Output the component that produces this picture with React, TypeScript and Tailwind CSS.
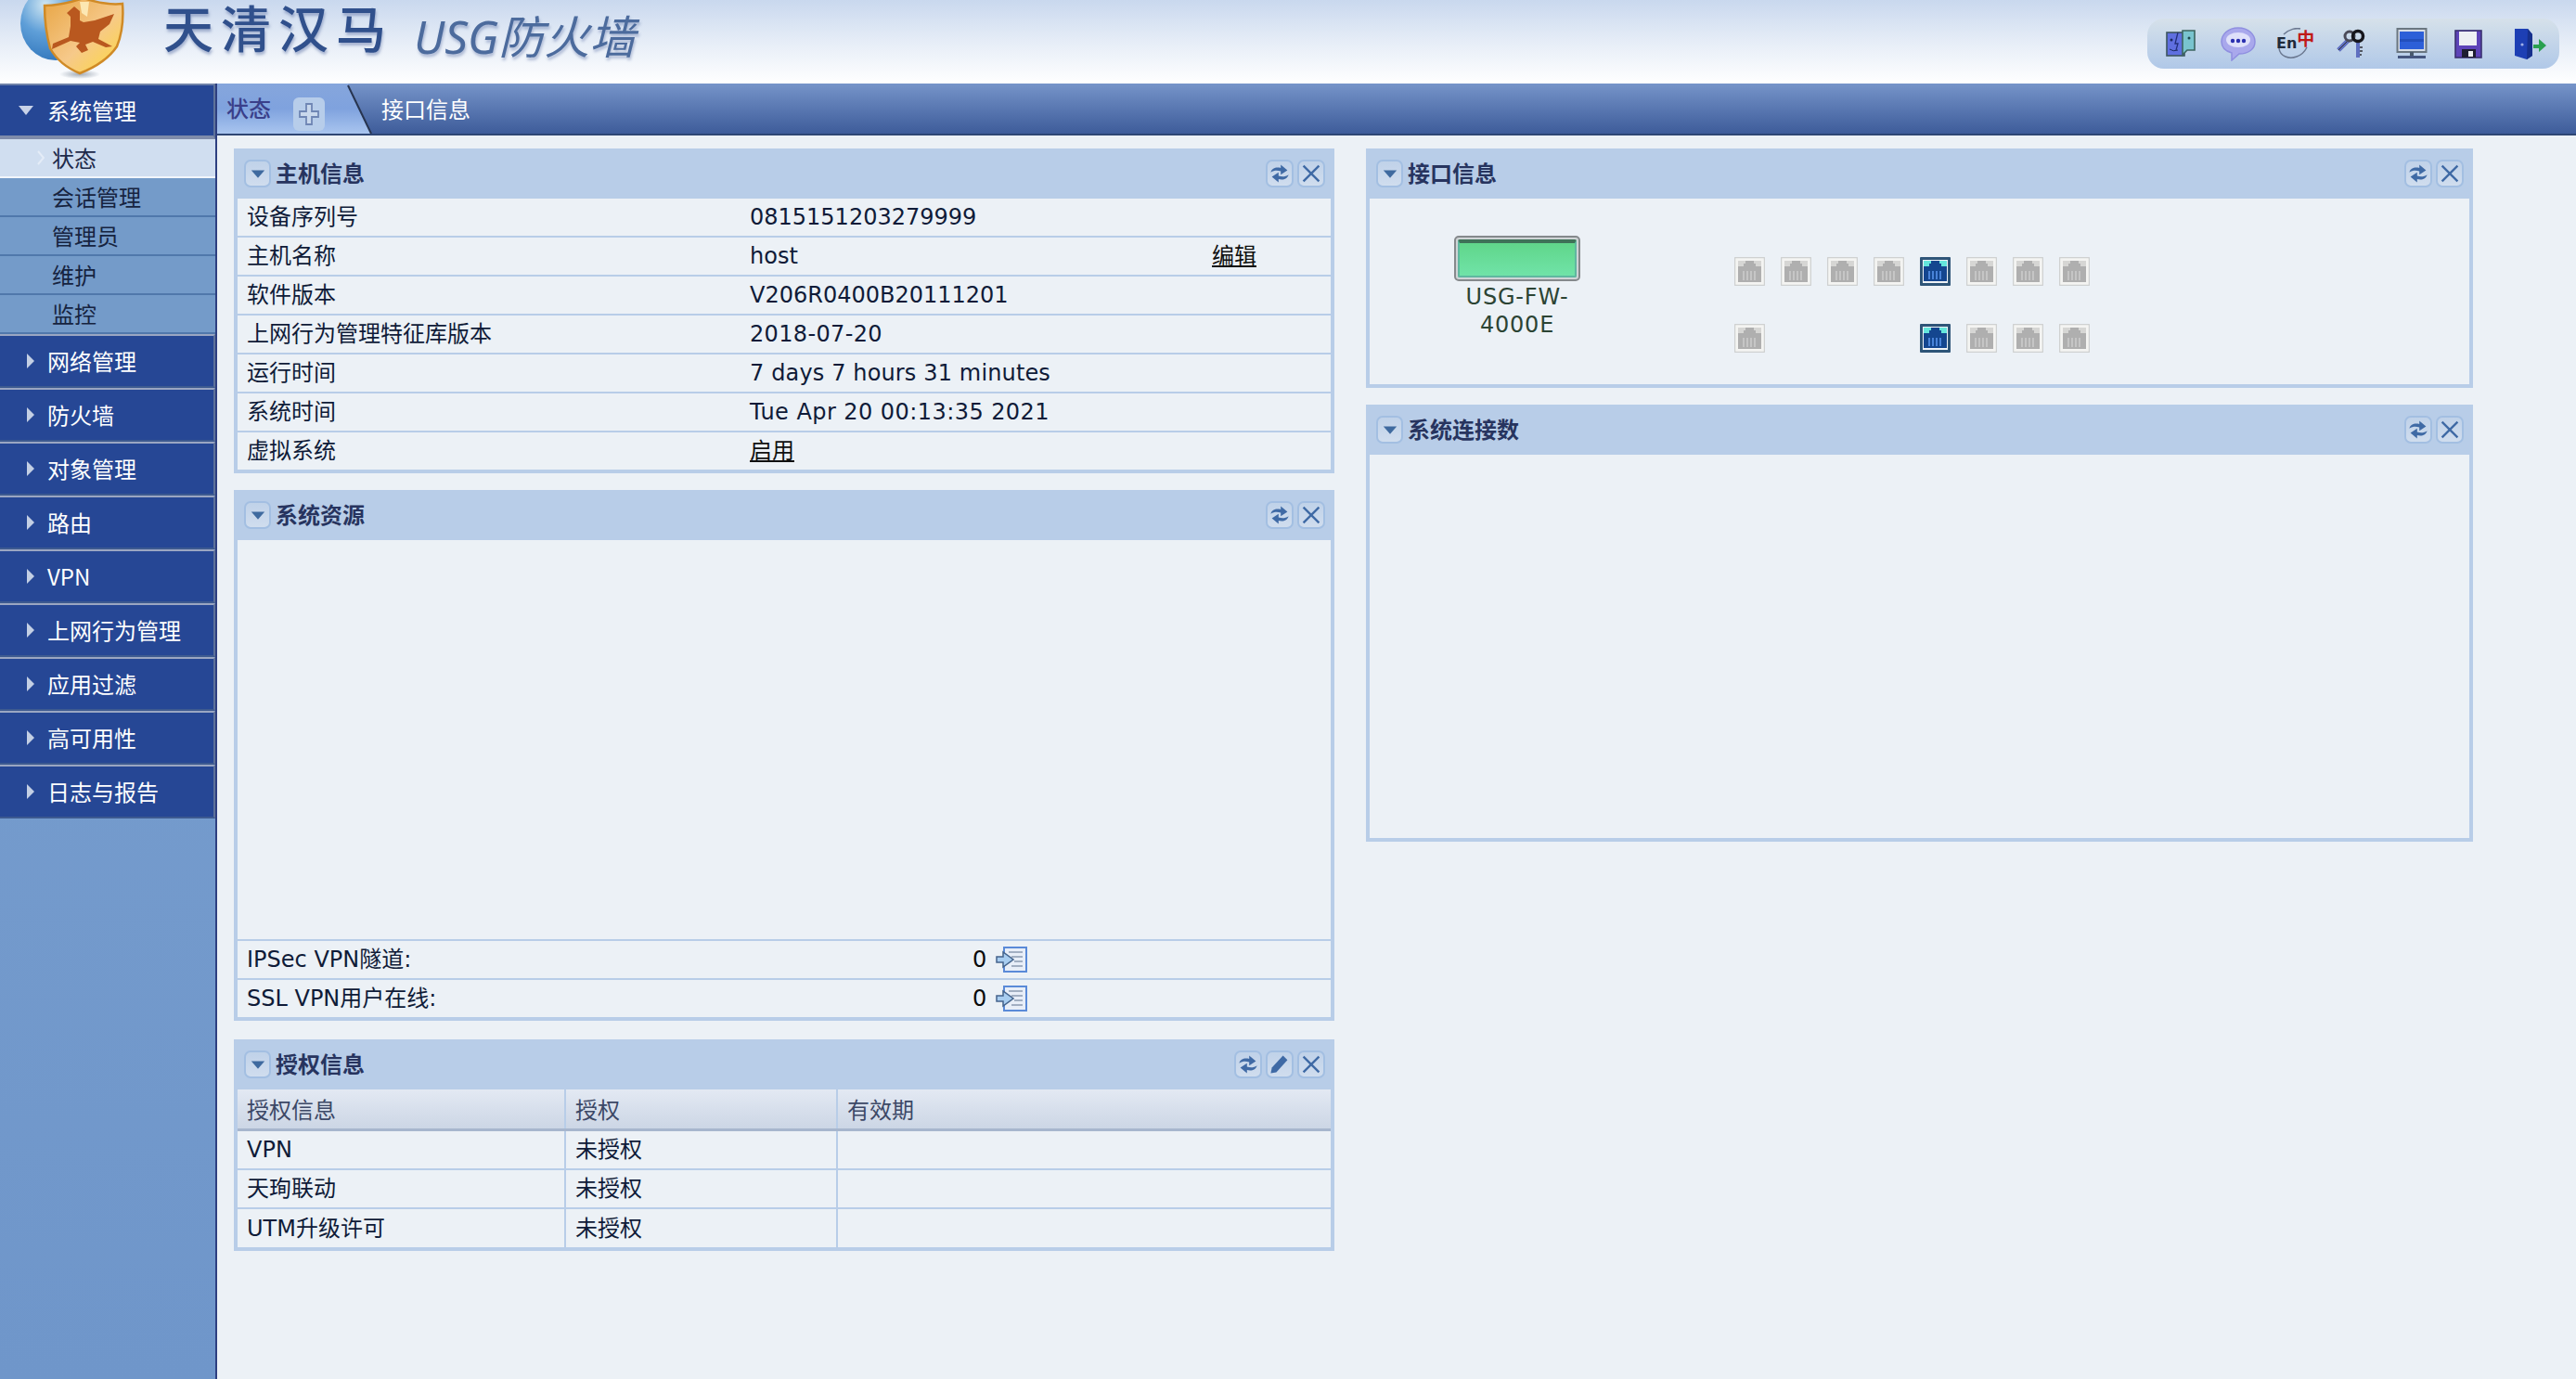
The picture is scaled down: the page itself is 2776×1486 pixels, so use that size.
import React from "react";

const FONT = "font-['DejaVu_Sans','Noto_Sans_CJK_SC',sans-serif]";
const CJK = "font-['Noto_Sans_CJK_SC',sans-serif]";

function Logo() {
  return (
    <svg width="140" height="90" viewBox="0 0 140 90" className="shrink-0 ml-[10px] self-start blur-[0.6px]">
      <defs>
        <linearGradient id="sh" x1="0" y1="0" x2="1" y2="1">
          <stop offset="0" stopColor="#e8a544" />
          <stop offset="0.55" stopColor="#f6c98a" />
          <stop offset="0.85" stopColor="#fbd456" />
          <stop offset="1" stopColor="#e59a22" />
        </linearGradient>
        <radialGradient id="gl" cx="0.35" cy="0.25" r="0.85">
          <stop offset="0" stopColor="#cfe6f2" />
          <stop offset="0.45" stopColor="#5f9fd8" />
          <stop offset="1" stopColor="#2a70b8" />
        </radialGradient>
        <radialGradient id="sd" cx="0.5" cy="0.5" r="0.5">
          <stop offset="0" stopColor="#5a6a80" stopOpacity="0.55" />
          <stop offset="1" stopColor="#5a6a80" stopOpacity="0" />
        </radialGradient>
      </defs>
      <ellipse cx="76" cy="80" rx="22" ry="5" fill="url(#sd)" />
      <ellipse cx="50" cy="25" rx="38" ry="40" fill="url(#gl)" />
      <path d="M38 6 Q56 6 80 -2 Q104 6 122 4 Q124 30 116 50 Q104 68 76 79 Q54 70 44 52 Q38 30 38 6Z" fill="url(#sh)" stroke="#d08a26" strokeWidth="2.5" />
      <path d="M62 14 L70 7 L76 12 L76 22 L80 24 L92 22 L113 15 L108 26 L98 34 L96 42 L111 50 L104 51 L90 45 L82 48 L85 54 L78 57 L72 50 L76 46 L66 44 L46 53 L47 47 L64 40 L66 28 L66 18Z" fill="#b9581f" />
      <path d="M76 2 L86 2 L84 18 L78 14Z" fill="#fff2c4" opacity="0.8" />
    </svg>
  );
}

function ToolIcons() {
  return (
    <div className="w-[444px] h-[54px] mt-[20px] mr-[18px] rounded-[18px] bg-gradient-to-b from-[#d6e1ea] to-[#b0c8e8] flex items-center">
      <svg width="32" height="30" viewBox="0 0 32 30" className="ml-[20px] blur-[0.4px]">
        <rect x="1" y="3" width="19" height="25" fill="#5f6fe0" stroke="#3c5560" strokeWidth="1.6" />
        <path d="M18 1 H31 V22 H23 L18 27Z" fill="#79c4cf" stroke="#3c6560" strokeWidth="1.6" />
        <path d="M13 3 L10 15 H13 L11 22" stroke="#23307a" fill="none" strokeWidth="1.3" />
        <circle cx="6" cy="11" r="1.5" fill="#1c2a60" />
        <circle cx="25" cy="9" r="1.5" fill="#1c4a50" />
        <path d="M4 21 Q8 24 13 22" stroke="#1c2a60" fill="none" />
      </svg>
      <svg width="38" height="38" viewBox="0 0 38 38" className="ml-[27px] blur-[0.4px]">
        <path d="M19 2 C30 2 37 9 37 17 C37 25 30 30 20 30 L12 37 L12 29 C5 27 1 23 1 17 C1 9 8 2 19 2Z" fill="#a9a8ec" stroke="#8f8fe0" strokeWidth="1.5" />
        <ellipse cx="19" cy="15" rx="13" ry="8" fill="#dfe0fa" />
        <circle cx="13" cy="16" r="2.2" fill="#2a2fb0" />
        <circle cx="19" cy="16" r="2.2" fill="#2a2fb0" />
        <circle cx="25" cy="16" r="2.2" fill="#2a2fb0" />
      </svg>
      <div className="ml-[22px] relative w-[41px] h-[34px] flex items-start">
        <svg width="40" height="34" viewBox="0 0 40 34" className="absolute left-0 top-0">
          <path d="M3 22 C4 31 14 34 22 31 C28 29 31 25 33 21 M8 7 C14 1 22 0 26 1" stroke="#6b7890" strokeWidth="1.5" fill="none" />
        </svg>
        <span className={`relative mt-[7px] text-[16px] leading-[20px] font-bold text-[#1f2a3a] ${FONT}`}>En</span>
        <span className={`relative mt-[-1px] text-[19px] leading-[24px] font-bold text-[#c01818] ${CJK}`}>中</span>
      </div>
      <svg width="31" height="33" viewBox="0 0 31 33" className="ml-[24px] blur-[0.3px]">
        <path d="M2 23 L13 12" stroke="#5f6fc0" strokeWidth="5" />
        <path d="M2 23 L13 12" stroke="#30303a" strokeWidth="1" />
        <circle cx="14" cy="8" r="5" fill="none" stroke="#4a4a58" strokeWidth="3" />
        <path d="M23 12 L23 31" stroke="#5f6fc0" strokeWidth="4" />
        <path d="M25 20 L28 20 M25 24 L28 24 M25 28 L27 28" stroke="#30303a" strokeWidth="1.5" />
        <circle cx="23" cy="8" r="5.5" fill="none" stroke="#16161c" strokeWidth="3.5" />
      </svg>
      <svg width="34" height="34" viewBox="0 0 34 34" className="ml-[33px] blur-[0.4px]">
        <rect x="1.5" y="1" width="31" height="25" fill="#d7dde6" stroke="#6a7680" strokeWidth="2" />
        <rect x="4" y="4" width="26" height="19" fill="#2d5fd8" />
        <rect x="4" y="12" width="26" height="3" fill="#2048b0" opacity="0.7" />
        <rect x="15" y="26" width="4" height="4" fill="#4a5a6c" />
        <rect x="2" y="30" width="30" height="3" fill="#46567e" />
      </svg>
      <svg width="30" height="31" viewBox="0 0 30 31" className="ml-[29px] blur-[0.4px]">
        <rect x="1" y="1" width="28" height="29" fill="#5d43b8" stroke="#3a3070" strokeWidth="1.6" />
        <rect x="5" y="2" width="19" height="15" fill="#eef0f4" />
        <rect x="8" y="21" width="15" height="9" fill="#1e1e30" />
        <rect x="15" y="23" width="5" height="6" fill="#eef0f4" />
      </svg>
      <svg width="36" height="35" viewBox="0 0 36 35" className="ml-[34px] blur-[0.4px]">
        <path d="M1 1 H15 L20 7 V30 L14 34 L1 30Z" fill="#1d3fb4" />
        <path d="M15 1 L20 7 V30 L14 34 Z" fill="#16308c" />
        <circle cx="9" cy="18" r="1.6" fill="#9fb0e8" />
        <path d="M21 18 H27 V12 L35 19 L27 26 V22 H21Z" fill="#2aa050" />
      </svg>
    </div>
  );
}

function HeadBtn({ kind }: { kind: "collapse" | "refresh" | "close" | "edit" }) {
  return (
    <span className={`${kind === "collapse" ? "w-[29px]" : "w-[30px]"} h-[30px] rounded-[7px] border-2 border-[#a3bfe2] bg-gradient-to-b from-[#c0d2e9] to-[#d0ddee] flex items-center justify-center shrink-0`}>
      <svg width="24" height="24" viewBox="0 0 20 20">
        {kind === "collapse" && <path d="M4 7 H16 L10 14Z" fill="#3f6a9f" />}
        {kind === "refresh" && (
          <>
            <path d="M2 9 C3 5 7 4 11 5 V2 L17 7 L11 11 V8 C8 7 5 7 2 9Z" fill="#3f6aa5" />
            <path d="M18 11 C17 15 13 16 9 15 V18 L3 13 L9 9 V12 C12 13 15 13 18 11Z" fill="#3f6aa5" />
          </>
        )}
        {kind === "close" && <path d="M3 3 L17 17 M17 3 L3 17" stroke="#3f6aa5" strokeWidth="2" />}
        {kind === "edit" && <path d="M13 2 L17 6 L7 17 L2 18 L3 13Z" fill="#3f6aa5" />}
      </svg>
    </span>
  );
}

function Panel({ title, edit, children }: { title: string; edit?: boolean; children: React.ReactNode }) {
  return (
    <section className="bg-[#ecf1f6] border-[4px] border-t-0 border-[#b8cde8] flex flex-col">
      <div className="h-[54px] -mx-[4px] bg-[#b8cde8] flex items-center pl-[11px] pr-[10px] shrink-0">
        <HeadBtn kind="collapse" />
        <span className={`ml-[5px] -mt-[2px] text-[24px] leading-[30px] font-semibold text-[#27345f] ${CJK}`}>{title}</span>
        <span className="ml-auto flex gap-[4px]">
          <HeadBtn kind="refresh" />
          {edit && <HeadBtn kind="edit" />}
          <HeadBtn kind="close" />
        </span>
      </div>
      {children}
    </section>
  );
}

function InfoRow({ label, value, link, extra, last, track = "" }: { label: string; value: string; link?: boolean; extra?: string; last?: boolean; track?: string }) {
  return (
    <div className={`${last ? "h-[40px]" : "h-[42px] border-b-2 border-[#b8cde8]"} flex items-center text-[24px] text-[#0f1b38] ${FONT}`}>
      <span className="w-[552px] pl-[10px] shrink-0">{label}</span>
      <span className={`w-[498px] shrink-0 ${track} ${link ? "underline text-[#101010]" : ""}`}>{value}</span>
      {extra && <span className="underline text-[#101010]">{extra}</span>}
    </div>
  );
}

function DocIcon() {
  return (
    <svg width="34" height="28" viewBox="0 0 34 28" className="ml-[10px] blur-[0.3px]">
      <rect x="9" y="1" width="24" height="26" fill="#e8eef8" stroke="#5a8ad8" strokeWidth="2" />
      <path d="M14 6 H29 M17 11 H29 M20 16 H29 M17 21 H29" stroke="#8a9ab0" strokeWidth="1.5" />
      <path d="M1 11 H8 V6 L19 14 L8 22 V17 H1Z" fill="#a8cdf0" stroke="#44638c" strokeWidth="1.5" />
    </svg>
  );
}

function VpnRow({ label }: { label: string }) {
  return (
    <div className={`h-[42px] flex items-center text-[24px] text-[#0f1b38] ${FONT} border-t-2 border-[#b8cde8]`}>
      <span className="w-[792px] pl-[10px] shrink-0">{label}</span>
      <span className="text-[#0a0a0a]">0</span>
      <DocIcon />
    </div>
  );
}

function Port({ on, className = "" }: { on?: boolean; className?: string }) {
  if (on) {
    return (
      <svg width="33" height="31" viewBox="0 0 33 31" className={`blur-[0.3px] ${className}`}>
        <rect x="0" y="0" width="33" height="31" rx="1" fill="#2e5578" />
        <rect x="3" y="3" width="27" height="25" fill="#eef2f6" />
        <rect x="4" y="4" width="25" height="22" fill="#64e6dc" />
        <path d="M4 26 V10 H10 V7 H12 V4 H21 V7 H23 V10 H29 V26Z" fill="#14468f" />
        <path d="M10 15 V24 M14 15 V24 M18 15 V24 M22 15 V24" stroke="#4f8ae0" strokeWidth="1.8" />
      </svg>
    );
  }
  return (
    <svg width="33" height="31" viewBox="0 0 33 31" className={`blur-[0.3px] ${className}`}>
      <rect x="0.5" y="0.5" width="32" height="30" rx="1" fill="#f4f4f2" stroke="#cfd1d1" strokeWidth="1.5" />
      <rect x="4" y="4" width="25" height="23" fill="#d6d6d4" />
      <path d="M4 27 V10 H10 V7 H12 V4 H21 V7 H23 V10 H29 V27Z" fill="#afafaf" />
      <path d="M10 15 V25 M14 15 V25 M18 15 V25 M22 15 V25" stroke="#c8c8c8" strokeWidth="1.8" />
    </svg>
  );
}

function Sidebar() {
  const sub = ["会话管理", "管理员", "维护", "监控"];
  const top = ["网络管理", "防火墙", "对象管理", "路由", "VPN", "上网行为管理", "应用过滤", "高可用性", "日志与报告"];
  return (
    <aside className={`w-[234px] shrink-0 border-r-2 border-[#2d3f80] bg-gradient-to-b from-[#7aa0cf] to-[#6f96ca] ${CJK}`}>
      <div className="h-[60px] bg-[#264795] border-t-2 border-b-[4px] border-r-2 border-t-[#6e81a8] border-b-[#7f8cab] border-r-[#5f7299] flex items-center text-white text-[24px]">
        <svg width="18" height="12" viewBox="0 0 18 12" className="ml-[19px] blur-[0.3px]"><path d="M1 1 H17 L9 11Z" fill="#c8d2e8" /></svg>
        <span className="ml-[14px]">系统管理</span>
      </div>
      <div className="h-[40px] bg-[#d0def0] flex items-center text-[24px] text-[#1e2a4a] pl-[56px] relative">
        <svg width="8" height="16" viewBox="0 0 8 16" className="absolute left-[40px] top-[12px]"><path d="M1 1 L7 8 L1 15" stroke="#e4ecf7" strokeWidth="2" fill="none" /></svg>
        状态
      </div>
      <div className="h-[2px] bg-[#f2f6fb]" />
      {sub.map((s) => (
        <div key={s} className="h-[42px] bg-[#749bc9] border-b-2 border-[#5078ab] flex items-center pl-[56px] text-[24px] text-[#16233f]">
          {s}
        </div>
      ))}
      {top.map((t) => (
        <div key={t} className="h-[58px] bg-[#264795] border-t-2 border-r-2 border-b-2 border-t-[#9aa6c2] border-b-[#3d5a90] border-r-[#5f7299] flex items-center text-white text-[24px]">
          <svg width="10" height="18" viewBox="0 0 10 18" className="ml-[28px] blur-[0.3px]"><path d="M1 1 L9 9 L1 17Z" fill="#c3cfe4" /></svg>
          <span className="ml-[13px]">{t}</span>
        </div>
      ))}
    </aside>
  );
}

export default function App() {
  return (
    <div className="w-[2776px] h-[1486px] overflow-hidden flex flex-col bg-[#ecf1f6]">
      <header className="h-[90px] shrink-0 bg-gradient-to-b from-[#c9d8ee] via-[#e6edf7] to-[#ffffff] flex items-start overflow-hidden">
        <Logo />
        <span className="ml-[26px] mt-[4px] text-[54px] leading-[60px] font-medium tracking-[8px] text-[#30508c] [text-shadow:1px_3px_3px_rgba(100,120,170,0.5)] font-['Liberation_Serif','Noto_Sans_CJK_SC',sans-serif]">天清汉马</span>
        <span className="ml-[22px] mt-[6px] text-[49px] leading-[66px] italic text-[#4c6b9d] [text-shadow:1px_3px_3px_rgba(100,120,170,0.45)] font-['Noto_Sans','Noto_Sans_CJK_SC',sans-serif]">USG防火墙</span>
        <div className="ml-auto">
          <ToolIcons />
        </div>
      </header>
      <div className="flex flex-1 min-h-0">
        <Sidebar />
        <main className="flex-1 flex flex-col min-w-0">
          <div className="h-[56px] shrink-0 bg-gradient-to-b from-[#7694c9] to-[#3e5c9a] border-b-2 border-[#2e4674] flex items-center relative">
            <div className="w-[166px] h-[54px] shrink-0 relative">
              <div className="absolute inset-0 bg-gradient-to-b from-[#86a6dc] via-[#7fa2de] to-[#a9c5ef] [clip-path:polygon(0_0,85%_0,100%_100%,0_100%)]" />
              <svg width="34" height="56" viewBox="0 0 34 56" className="absolute right-[-2px] top-0">
                <path d="M7 2 L32 54" stroke="#27344f" strokeWidth="2" fill="none" />
              </svg>
              <span className={`absolute left-[10px] top-[11px] text-[24px] leading-[30px] font-medium text-[#3a3f8a] ${CJK}`}>状态</span>
              <span className="absolute left-[82px] top-[15px] w-[34px] h-[36px] rounded-[6px] bg-[#b7cdea] flex items-center justify-center">
                <svg width="24" height="26" viewBox="0 0 24 26"><path d="M9 2 H15 V10 H22 V16 H15 V24 H9 V16 H2 V10 H9Z" fill="#c9d8ec" stroke="#6f86b4" strokeWidth="1.8" /></svg>
              </span>
            </div>
            <span className={`ml-[11px] text-[24px] leading-[30px] text-white ${CJK}`}>接口信息</span>
          </div>
          <div className="flex flex-1 items-start pt-[14px] pl-[18px]">
            <div className="w-[1186px] shrink-0 flex flex-col gap-[18px]">
              <Panel title="主机信息">
                <InfoRow label="设备序列号" value="0815151203279999" />
                <InfoRow label="主机名称" value="host" extra="编辑" />
                <InfoRow label="软件版本" value="V206R0400B20111201" />
                <InfoRow label="上网行为管理特征库版本" value="2018-07-20" track="tracking-[0.35px]" />
                <InfoRow label="运行时间" value="7 days 7 hours 31 minutes" track="tracking-[0.14px]" />
                <InfoRow label="系统时间" value="Tue Apr 20 00:13:35 2021" track="tracking-[0.44px]" />
                <InfoRow label="虚拟系统" value="启用" link last />
              </Panel>
              <Panel title="系统资源">
                <div className="h-[430px]" />
                <VpnRow label="IPSec VPN隧道:" />
                <VpnRow label="SSL VPN用户在线:" />
              </Panel>
              <div className="mt-[2px]">
                <Panel title="授权信息" edit>
                  <div className={`h-[45px] flex text-[24px] text-[#3c4866] bg-gradient-to-b from-[#e3e9f3] to-[#ccd6e5] border-b-[3px] border-[#a7b6cd] ${CJK}`}>
                    <span className="w-[354px] pl-[10px] border-r-2 border-[#b8cde8] flex items-center">授权信息</span>
                    <span className="w-[293px] pl-[10px] border-r-2 border-[#b8cde8] flex items-center">授权</span>
                    <span className="flex-1 pl-[10px] flex items-center">有效期</span>
                  </div>
                  {[
                    ["VPN", "未授权"],
                    ["天珣联动", "未授权"],
                    ["UTM升级许可", "未授权"],
                  ].map((r, i) => (
                    <div key={r[0]} className={`flex text-[24px] text-[#0f1b38] ${FONT} ${i < 2 ? "h-[42px] border-b-2 border-[#b8cde8]" : "h-[41px]"}`}>
                      <span className="w-[354px] pl-[10px] border-r-2 border-[#b8cde8] flex items-center">{r[0]}</span>
                      <span className="w-[293px] pl-[10px] border-r-2 border-[#b8cde8] flex items-center">{r[1]}</span>
                      <span className="flex-1" />
                    </div>
                  ))}
                </Panel>
              </div>
            </div>
            <div className="w-[1193px] ml-[34px] shrink-0 flex flex-col gap-[18px]">
              <Panel title="接口信息">
                <div className="h-[200px] flex pl-[91px] pt-[40px]">
                  <div className="w-[136px] shrink-0 flex flex-col items-center">
                    <div className="w-[136px] h-[49px] rounded-[5px] border-2 border-[#85898c] bg-[#cfd4d6] p-[2px]">
                      <div className="w-full h-full rounded-[2px] border-t-[4px] border-t-[#3f7258] border-x-2 border-b-2 border-[#5fb8a0] bg-gradient-to-b from-[#60d68a] to-[#70e3a8]" />
                    </div>
                    <div className={`mt-[2px] text-center text-[24px] leading-[30px] tracking-[0.8px] text-[#2c4434] ${FONT}`}>USG-FW-4000E</div>
                  </div>
                  <div className="ml-[166px] pt-[23px] grid grid-cols-[repeat(8,33px)] gap-x-[17px] gap-y-[41px] self-start">
                    <Port /><Port /><Port /><Port /><Port on /><Port /><Port /><Port />
                    <Port className="col-start-1" /><Port on className="col-start-5" /><Port /><Port /><Port />
                  </div>
                </div>
              </Panel>
              <Panel title="系统连接数">
                <div className="h-[413px]" />
              </Panel>
            </div>
          </div>
        </main>
      </div>
    </div>
  );
}
